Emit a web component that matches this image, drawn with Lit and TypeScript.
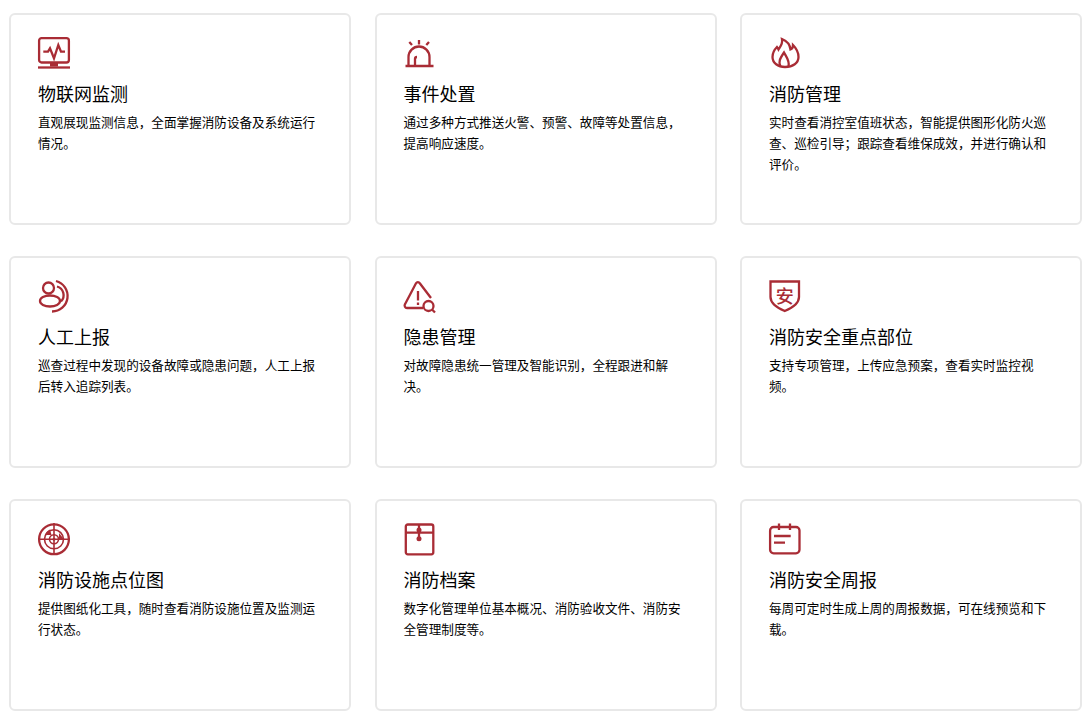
import { LitElement, html, css, svg } from "lit";
import { customElement } from "lit/decorators.js";

const icons = [
  svg`<rect x="1.100" y="1.100" width="29.800" height="24.400" rx="2.500"/><path d="M5.300 14.700H10l2-3.400 4 10 4.300-13.300 2.700 6.700h4"/><path class="f" d="M12 26h8v3.500h-8z"/><path d="M0 30.500h32"/>`,
  svg`<path d="M1.500 29h28M4.500 29v-9a10.500 10.500 0 0 1 21 0v9M11 29v-7a2 2 0 0 1 2-2M15 3v4.500M5.300 5 8 8M25 5l-2.700 3"/>`,
  svg`<path d="M13 2c1 5-2 8-3.500 10.500-.5-1-1-2-1.500-2.500-3 3-4.500 6.500-4.500 10C3.500 26 9 30 16 30c8 0 13.500-4 13.500-10 0-4.500-2-8.500-5.500-12 0 2-1 4-2.500 4.500C21 8 18 4 13 2Z"/><path d="M11.500 29.500C9 25 11 21.500 15 15.500c2 4 6 8.500 4.500 14"/>`,
  svg`<circle cx="10.500" cy="8" r="5.500"/><ellipse cx="12" cy="21" rx="10" ry="5.500"/><path d="M18 1a15.500 15.500 0 0 1-4 30.500M19 6.500a9 9 0 0 1 4 15"/>`,
  svg`<path d="M19 28H3a2.500 2.500 0 0 1-2-3.800L12 3.300a2.200 2.200 0 0 1 3.800 0L27 18"/><path d="M14 11v9.500M14 22.500v2.500"/><circle cx="24.500" cy="26" r="5"/><path d="m28 29.500 3 3"/>`,
  svg`<path d="M1.500 1.500H30V17c0 7-7 11-14.250 14C8.500 28 1.500 24 1.500 17Z"/><text class="t" x="15.700" y="23" text-anchor="middle">安</text>`,
  svg`<circle cx="16" cy="16.300" r="14.900"/><circle class="thin" cx="16" cy="16.300" r="9.500"/><circle class="thin" cx="16" cy="16.300" r="4.500"/><path class="thin" d="M0 16.300h32M16 0v32"/><path class="f" d="M7 12c.8-2.500 2.500-4.500 5-5.500l1.500 5.500zM21 10l5 6.300h-5z"/><circle class="f" cx="16" cy="16.300" r="1.500"/>`,
  svg`<rect x="1.800" y="1.500" width="27.500" height="29.800" rx="2"/><path d="M1.800 9.700h27.500M15 1.500v14"/><circle class="f" cx="15" cy="7" r="2.500"/><circle class="f" cx="15" cy="15.700" r="2.500"/>`,
  svg`<rect x="1.100" y="4" width="29.400" height="26.300" rx="3.500"/><path d="M10 .5v6.500M21 .5v6.500M5 13h16.700M5 19.700h11"/>`,
];

const cards: [string, string][] = [
  ["物联网监测", "直观展现监测信息，全面掌握消防设备及系统运行情况。"],
  ["事件处置", "通过多种方式推送火警、预警、故障等处置信息，提高响应速度。"],
  ["消防管理", "实时查看消控室值班状态，智能提供图形化防火巡查、巡检引导；跟踪查看维保成效，并进行确认和评价。"],
  ["人工上报", "巡查过程中发现的设备故障或隐患问题，人工上报后转入追踪列表。"],
  ["隐患管理", "对故障隐患统一管理及智能识别，全程跟进和解决。"],
  ["消防安全重点部位", "支持专项管理，上传应急预案，查看实时监控视频。"],
  ["消防设施点位图", "提供图纸化工具，随时查看消防设施位置及监测运行状态。"],
  ["消防档案", "数字化管理单位基本概况、消防验收文件、消防安全管理制度等。"],
  ["消防安全周报", "每周可定时生成上周的周报数据，可在线预览和下载。"],
];

@customElement("app-root")
export class AppRoot extends LitElement {
  static styles = css`
    :host {
      display: block;
      background: #fff;
      height: 716px;
      overflow: hidden;
      font-family: "Noto Sans CJK SC", "Liberation Sans", sans-serif;
      color: #000;
    }
    .grid {
      display: grid;
      grid-template-columns: repeat(3, 342px);
      grid-auto-rows: 212px;
      column-gap: 23.5px;
      row-gap: 31px;
      padding: 13px 0 0 9px;
    }
    .card {
      box-sizing: border-box;
      border: 2px solid #e8e8e8;
      border-radius: 6px;
      padding: 22px 27px 0;
      background: #fff;
    }
    .icon {
      display: block;
      width: 34px;
      height: 34px;
      overflow: visible;
      fill: none;
      stroke: #a92c35;
      stroke-width: 2.3;
    }
    .icon .thin {
      stroke-width: 1.6;
    }
    .icon .f {
      fill: #a92c35;
      stroke: none;
    }
    .icon .t {
      fill: #a92c35;
      stroke: none;
      font-size: 18px;
      font-weight: 500;
    }
    h3 {
      margin: 9px 0 0;
      font-size: 18px;
      font-weight: 400;
      line-height: 27px;
    }
    p {
      margin: 4px 0 0;
      font-size: 12.6px;
      font-weight: 400;
      line-height: 21px;
    }
  `;

  render() {
    return html`<div class="grid">
      ${cards.map(
        ([t, d], i) => html`<div class="card">
          <svg class="icon" viewBox="0 0 34 34">${icons[i]}</svg>
          <h3>${t}</h3>
          <p>${d}</p>
        </div>`
      )}
    </div>`;
  }
}
